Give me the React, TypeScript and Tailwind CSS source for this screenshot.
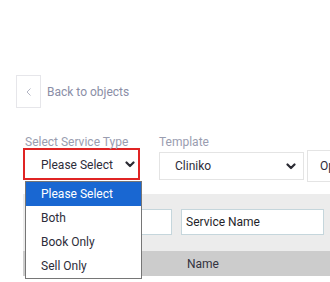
import React from "react";

const Chevron = () => (
  <svg width="10" height="7" viewBox="0 0 10 7" className="shrink-0">
    <polyline points="1.5,1.5 5,5 8.5,1.5" fill="none" stroke="#2b2b33" strokeWidth="2.2" strokeLinecap="round" strokeLinejoin="round" />
  </svg>
);

export default function App() {
  return (
    <div
      className="w-[330px] h-[282px] overflow-hidden bg-white relative"
      style={{ fontFamily: "Roboto, 'Liberation Sans', sans-serif" }}
    >
      <div className="pt-[75px] pl-[16px] flex items-center">
        <div className="w-[25px] h-[33px] border border-[#e6e6ea] flex items-center justify-center">
          <svg width="8" height="10" viewBox="0 0 8 10">
            <polyline points="5.5,1.5 2,5 5.5,8.5" fill="none" stroke="#b4b6c4" strokeWidth="1" />
          </svg>
        </div>
        <span className="ml-[6px] text-[12px] leading-[16px] text-[#8a8ea6]">Back to objects</span>
      </div>

      <div className="mt-[27px] pl-[23px] flex">
        <div className="relative w-[117px] shrink-0">
          <div className="pl-[2px] text-[12px] leading-[14px] text-[#9a9db0] whitespace-nowrap">Select Service Type</div>
          <div className="mt-[-1px] h-[32px] border-2 border-[#e02424] flex items-center pl-[16px] pr-[3px] justify-between bg-white">
            <span className="text-[12px] text-[#2d2d3a] mt-[2px]">Please Select</span>
            <Chevron />
          </div>
          <div className="absolute left-[2px] top-[46px] w-[117px] border border-[#767676] bg-white z-10">
            <div className="h-[24px] flex items-center pl-[15px] bg-[#1967d2] text-white text-[12px]">Please Select</div>
            <div className="h-[24px] flex items-center pl-[15px] text-[#2d2d3a] text-[12px]">Both</div>
            <div className="h-[24px] flex items-center pl-[15px] text-[#2d2d3a] text-[12px]">Book Only</div>
            <div className="h-[24px] flex items-center pl-[15px] text-[#2d2d3a] text-[12px]">Sell Only</div>
          </div>
        </div>
        <div className="ml-[19px] w-[145px] shrink-0">
          <div className="text-[12px] leading-[14px] text-[#9a9db0]">Template</div>
          <div className="mt-[3px] h-[28px] border border-[#e4e4e4] flex items-center pl-[15px] pr-[7px] justify-between">
            <span className="text-[12px] text-[#2d2d3a]">Cliniko</span>
            <Chevron />
          </div>
        </div>
        <div className="ml-[3px] w-[100px] shrink-0 pt-[15px]">
          <div className="h-[32px] border border-[#e4e4e4] border-r-0 flex items-center pl-[12px]">
            <span className="text-[12px] text-[#2d2d3a]">Op</span>
          </div>
        </div>
      </div>

      <div className="mt-[12px] ml-[23px] bg-[#ececec] h-[57px] pt-[15px] pl-[6px] flex gap-[9px]">
        <div className="w-[143px] h-[26px] border border-[#c5d6dc] bg-white shrink-0" />
        <div className="w-[143px] h-[26px] border border-[#c5d6dc] bg-white shrink-0 flex items-center pl-[4px]">
          <span className="text-[12px] text-[#1f1f2a]">Service Name</span>
        </div>
      </div>
      <div className="ml-[23px] bg-[#cccccc] h-[25px] flex items-center pl-[164px]">
        <span className="text-[12px] text-[#333340]">Name</span>
      </div>
    </div>
  );
}
